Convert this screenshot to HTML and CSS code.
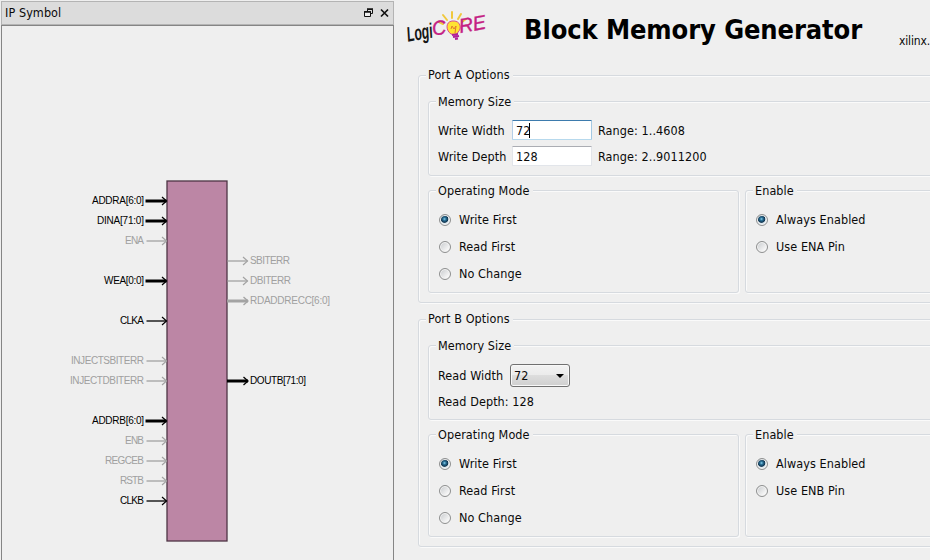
FILE: index.html
```html
<!DOCTYPE html>
<html lang="en">
<head>
<meta charset="utf-8">
<title>Block Memory Generator</title>
<link rel="stylesheet" href="styles.css">
</head>
<body>
<div class="app">
  <aside class="dock">
    <div class="dock-bar">
      <span class="dock-title">IP Symbol</span>
      <svg class="dock-icons" width="26" height="12" viewBox="0 0 26 12">
        <path d="M3.5 4V2.5H8.500V6.500H7" fill="none" stroke="#111"/>
        <path d="M3 2H9" stroke="#111" stroke-width="1.500"/>
        <path d="M.5 4.500H6.500V9.500H.5Z" fill="#eee" stroke="#111"/>
        <path d="M0 5H7" stroke="#111" stroke-width="1.500"/>
        <path d="M17 2.500L24 9.500M24 2.500L17 9.500" stroke="#111" stroke-width="1.700"/>
      </svg>
    </div>
    <div class="canvas">
      <svg class="symbol" width="390" height="534" viewBox="2 26 390 534">
        <defs>
          <g id="thin"><path d="M0 0H20" stroke-width="1.300"/><path d="M15.500 -4L20 0L15.500 4" stroke-width="1.200"/></g>
          <g id="bus"><path d="M-1 0H20" stroke-width="3"/><path d="M15.500 -4L20 0L15.500 4" stroke-width="1.300"/></g>
        </defs>
        <rect x="167" y="181" width="60" height="360" fill="#bc86a5" stroke="#4d3444" stroke-width="1.300"/>
        <g class="on">
          <use href="#bus" x="146.500" y="201"/><use href="#bus" x="146.500" y="221"/><use href="#bus" x="146.500" y="281"/>
          <use href="#thin" x="146.500" y="321"/><use href="#bus" x="146.500" y="421"/><use href="#thin" x="146.500" y="501"/>
          <use href="#bus" x="228" y="381"/>
        </g>
        <g class="off">
          <use href="#thin" x="146.500" y="241"/><use href="#thin" x="146.500" y="361"/><use href="#thin" x="146.500" y="381"/>
          <use href="#thin" x="146.500" y="441"/><use href="#thin" x="146.500" y="461"/><use href="#thin" x="146.500" y="481"/>
          <use href="#thin" x="227.500" y="261"/><use href="#thin" x="227.500" y="281"/><use href="#bus" x="228" y="301"/>
        </g>
        <g class="pin in">
          <text x="92" y="204" textLength="52">ADDRA[6:0]</text>
          <text x="97" y="224" textLength="47">DINA[71:0]</text>
          <text x="104" y="284" textLength="40">WEA[0:0]</text>
          <text x="120" y="324" textLength="24">CLKA</text>
          <text x="92" y="424" textLength="52">ADDRB[6:0]</text>
          <text x="120" y="504" textLength="24">CLKB</text>
          <text x="250" y="384" textLength="56">DOUTB[71:0]</text>
        </g>
        <g class="pin idle">
          <text x="125" y="244" textLength="19">ENA</text>
          <text x="71" y="364" textLength="73">INJECTSBITERR</text>
          <text x="70" y="384" textLength="74">INJECTDBITERR</text>
          <text x="125" y="444" textLength="19">ENB</text>
          <text x="105" y="464" textLength="39">REGCEB</text>
          <text x="120" y="484" textLength="24">RSTB</text>
          <text x="250" y="264" textLength="40">SBITERR</text>
          <text x="250" y="284" textLength="41">DBITERR</text>
          <text x="250" y="304" textLength="80">RDADDRECC[6:0]</text>
        </g>
      </svg>
    </div>
  </aside>
  <main class="main">
    <header class="header">
      <svg class="logo" width="84" height="40" viewBox="404 8 84 40">
        <g stroke="#f0c83c" stroke-width="2" stroke-linecap="round">
          <path d="M452 12V18M443 15L447 20M461 14L458 19M439 22L443 24M466 19L462 22"/>
        </g>
        <path d="M451 34C446 31 445 22 452 21C461 20 462 29 458 32L457 35Z" fill="#ffe332" stroke="#d8508a"/>
        <path d="M451 29L452 26L454 29L456 26L455 33" fill="none" stroke="#e07a30"/>
        <path d="M452 35L458 34M453 37L459 36M455 39L458 38.500" stroke="#b0209a" stroke-width="2"/>
        <g class="logo-text" transform="rotate(-10 407 42)">
          <text class="logi" x="408" y="42" textLength="26" lengthAdjust="spacingAndGlyphs">Logi</text>
          <text class="core" x="434" y="40.500" textLength="14" lengthAdjust="spacingAndGlyphs">C</text>
          <text class="core" x="461" y="42.500" textLength="27" lengthAdjust="spacingAndGlyphs">RE</text>
        </g>
      </svg>
      <h1 class="heading">Block Memory Generator</h1>
      <span class="vendor">xilinx.</span>
    </header>

    <section class="group port">
      <h2 class="title">Port A Options</h2>
      <div class="group memory">
        <h3 class="title">Memory Size</h3>
        <div class="field first"><span class="name">Write Width</span><span class="input focus">72<i class="caret"></i></span><span class="range">Range: 1..4608</span></div>
        <div class="field"><span class="name">Write Depth</span><span class="input">128</span><span class="range">Range: 2..9011200</span></div>
      </div>
      <div class="pair">
        <div class="group mode">
          <h3 class="title">Operating Mode</h3>
          <div class="option"><i class="radio checked"></i>Write First</div>
          <div class="option"><i class="radio"></i>Read First</div>
          <div class="option"><i class="radio"></i>No Change</div>
        </div>
        <div class="group enable">
          <h3 class="title">Enable</h3>
          <div class="option"><i class="radio checked"></i>Always Enabled</div>
          <div class="option"><i class="radio"></i>Use ENA Pin</div>
        </div>
      </div>
    </section>

    <section class="group port port-b">
      <h2 class="title">Port B Options</h2>
      <div class="group memory">
        <h3 class="title">Memory Size</h3>
        <div class="field first"><span class="name read">Read Width</span><span class="select">72<i class="arrow"></i></span></div>
        <div class="field depth">Read Depth: 128</div>
      </div>
      <div class="pair">
        <div class="group mode">
          <h3 class="title">Operating Mode</h3>
          <div class="option"><i class="radio checked"></i>Write First</div>
          <div class="option"><i class="radio"></i>Read First</div>
          <div class="option"><i class="radio"></i>No Change</div>
        </div>
        <div class="group enable">
          <h3 class="title">Enable</h3>
          <div class="option"><i class="radio checked"></i>Always Enabled</div>
          <div class="option"><i class="radio"></i>Use ENB Pin</div>
        </div>
      </div>
    </section>
  </main>
</div>
</body>
</html>
```
FILE: styles.css
```css
* { box-sizing: border-box; }
body {
  margin: 0;
  background: #efefef;
  color: #0a0a0a;
  font: 12.5px/16px "DejaVu Sans Condensed", "DejaVu Sans", sans-serif;
  font-stretch: condensed;
  letter-spacing: 0.08px;
}
.app { display: flex; width: 930px; height: 560px; overflow: hidden; }

.dock { flex: none; width: 394px; display: flex; flex-direction: column; }
.dock-bar {
  display: flex;
  align-items: center;
  justify-content: space-between;
  height: 24px;
  margin: 1px 0 0 1px;
  padding: 0 3px;
  background: #dcdcdc;
  border: 1px solid #b4b4b4;
}
.dock-icons { display: block; }
.canvas { flex: 1; border: solid #858585; border-width: 1px 1px 0; margin-left: 1px; }
.symbol { display: block; }
.on { fill: none; stroke: #000; }
.off { fill: none; stroke: #a3a3a3; }
.pin { font: 10px "Liberation Sans", Arial, sans-serif; letter-spacing: 0; fill: #000; }
.idle { fill: #a0a0a0; }

.main { flex: none; width: 560px; padding-left: 24px; }
.header { display: flex; height: 75px; margin-left: -14px; }
.logo { display: block; margin-top: 8px; }
.logo-text { font: italic bold 18px "Liberation Sans", Arial, sans-serif; letter-spacing: 0; }
.logi { fill: #151515; font-size: 21px; }
.core { fill: #c42083; font-weight: normal; stroke: #c42083; stroke-width: .4px; font-size: 20px; }
.heading {
  margin: 12px 0 0 36px;
  width: 375px;
  font-size: 27px;
  line-height: 36px;
  letter-spacing: -0.1px;
  white-space: nowrap;
  font-weight: bold;
  color: #000;
}
.vendor { margin-top: 33px; white-space: nowrap; font-size: 12px; letter-spacing: -0.15px; }

.group {
  border: 1px solid #d6dadf;
  border-radius: 3px;
  box-shadow: inset 1px 1px 0 #fafafa, 1px 1px 0 #fafafa;
  padding-left: 9px;
}
.title {
  width: max-content;
  height: 16px;
  margin: -9px 0 0 -2px;
  padding: 0 3px 0 2px;
  background: #efefef;
  font: inherit;
  white-space: nowrap;
}
.group .group .title { line-height: 18px; }
.port { height: 228px; margin-bottom: 16px; }
.port > .title { margin-bottom: 18px; }
.memory { height: 75px; margin-bottom: 14px; }
.port-b > .title { margin-bottom: 18px; }
.pair { display: flex; gap: 7px; }
.mode { width: 311px; height: 103px; flex: none; }
.enable { width: 260px; height: 103px; flex: none; margin-left: -1px; }
.title + .option { margin-top: 8px; }
.option { display: flex; align-items: center; height: 27px; padding-left: 1px; white-space: nowrap; }
.field { display: flex; align-items: center; height: 20px; margin-top: 6px; white-space: nowrap; }
.field.first { margin-top: 11px; }
.port-b .field.first { margin-top: 12px; }
.name { width: 74px; }
.name, .range { padding-top: 1px; }
.name.read { width: 72px; }
.depth { padding-top: 2px; }
.input {
  display: flex;
  align-items: center;
  width: 80px;
  height: 20px;
  margin-right: 6px;
  padding: 1px 0 0 3px;
  background: #fff;
  border: 1px solid #e2e5ea;
  border-top-color: #abadb3;
  border-radius: 1px;
}
.input.focus { border-color: #3d7bad #a4c9e3 #b7d9ed #b5cfe7; }
.caret { width: 1px; height: 15px; margin-left: -1px; background: #000; }
.select {
  display: flex;
  align-items: center;
  justify-content: space-between;
  flex: none;
  width: 60px;
  height: 23px;
  padding: 1px 5px 0 3px;
  border: 1px solid #707070;
  border-radius: 3px;
  background: linear-gradient(#f2f2f2, #ebebeb 50%, #dddddd 50%, #cfcfcf);
  box-shadow: inset 0 0 0 1px #f8f8f8;
}
.arrow { border: 4px solid transparent; border-top-color: #000; border-bottom: 0; }
.radio {
  width: 12px;
  height: 12px;
  margin-right: 8px;
  border: 1px solid #8e8f8f;
  border-radius: 50%;
  background: linear-gradient(135deg, #c6c9cc, #f5f5f5 75%);
  box-shadow: inset 0 0 0 1px #f4f4f4;
}
.radio.checked { background: radial-gradient(circle at 45% 40%, #8fd4ee 0, #2a7299 1.5px, #10344f 3.4px, #dfe8ed 4.2px); }
```
